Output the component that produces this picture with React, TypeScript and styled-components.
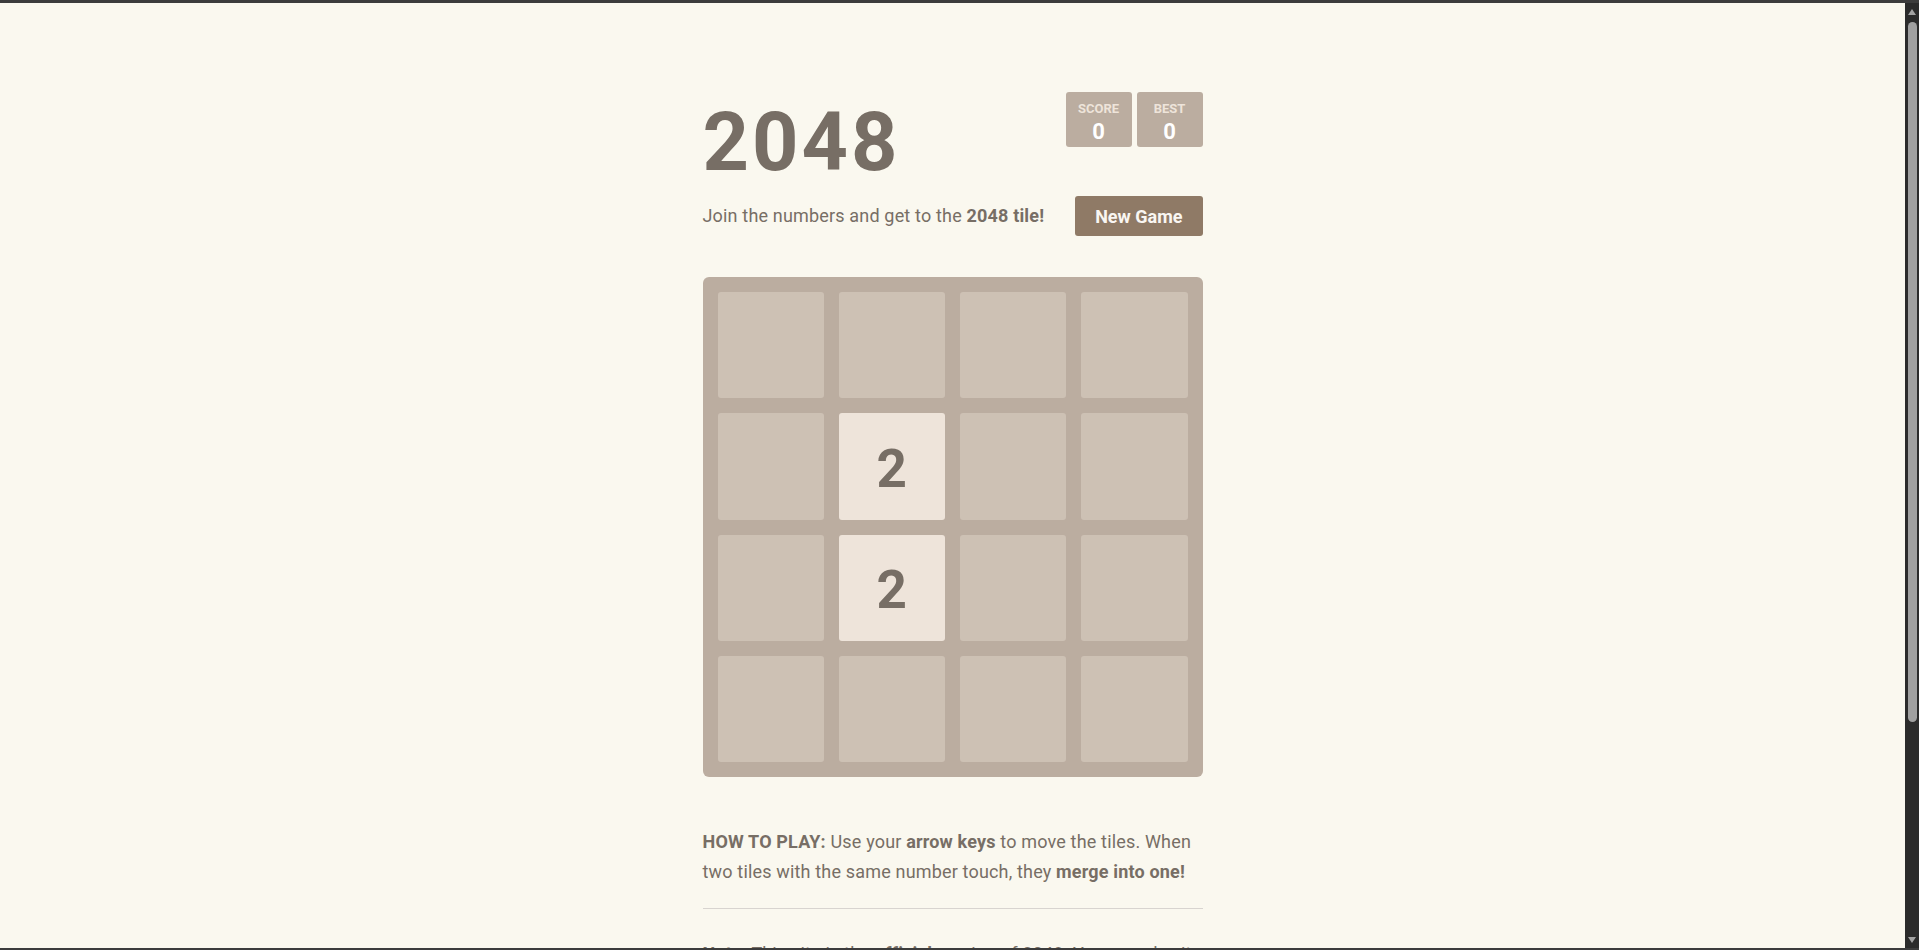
import styled, { createGlobalStyle } from 'styled-components'

const GlobalStyle = createGlobalStyle`
  html, body {
    margin: 0;
    padding: 0;
    background: #3c3c3c;
    overflow: hidden;
  }
  * {
    box-sizing: border-box;
  }
`

const board: number[][] = [
  [0, 0, 0, 0],
  [0, 2, 0, 0],
  [0, 2, 0, 0],
  [0, 0, 0, 0],
]

const Frame = styled.div`
  margin-top: 3px;
  height: 945px;
  display: flex;
`

const Viewport = styled.div`
  flex: 1;
  overflow: hidden;
  background: #faf8ef;
`

/* window scrollbar on the right edge */
const ScrollTrack = styled.div`
  width: 14px;
  display: flex;
  flex-direction: column;
  align-items: center;
  padding: 6px 0 5px;
  background: #2b2b2b;
`

const ScrollArrow = styled.div<{ $down?: boolean }>`
  width: 0;
  height: 0;
  border-left: 4.5px solid transparent;
  border-right: 4.5px solid transparent;
  ${(p) =>
    p.$down
      ? 'border-top: 6px solid #a3a3a3; margin-top: auto;'
      : 'border-bottom: 6px solid #a3a3a3;'}
`

const ScrollThumb = styled.div`
  width: 9px;
  height: 700px;
  margin-top: 7px;
  border-radius: 4.5px;
  background: #a0a0a0;
`

const Container = styled.div`
  width: 500px;
  margin: 0 auto;
  padding: 89px 0 80px;
  color: #776e65;
  font-family: Roboto, 'Liberation Sans', Arial, sans-serif;
  font-size: 18px;
  letter-spacing: 0.17px;
`

const Heading = styled.div`
  display: flex;
  justify-content: space-between;
  align-items: flex-start;
`

const Title = styled.h1`
  margin: 0;
  font-size: 81px;
  font-weight: 700;
  line-height: 102px;
  letter-spacing: 3px;
`

const Scores = styled.div`
  display: flex;
  gap: 5px;
`

const ScoreBox = styled.div`
  width: 66px;
  height: 55px;
  padding-top: 9px;
  display: flex;
  flex-direction: column;
  align-items: center;
  background: #bbada0;
  border-radius: 3px;
  font-weight: 700;
  letter-spacing: 0;
`

const ScoreLabel = styled.div`
  font-size: 13px;
  line-height: 15px;
  color: #eee4da;
  text-transform: uppercase;
`

const ScoreValue = styled.div`
  margin-top: 2px;
  font-size: 22px;
  line-height: 28px;
  color: #ffffff;
`

const IntroRow = styled.div`
  display: flex;
  justify-content: space-between;
  align-items: center;
  margin-top: 2px;
`

const Intro = styled.p`
  margin: 0;
  line-height: 30px;
`

const NewGameButton = styled.button`
  height: 40px;
  padding: 0 20px;
  border: none;
  border-radius: 3px;
  background: #8f7a66;
  color: #f9f6f2;
  font-family: inherit;
  font-size: 18px;
  font-weight: 700;
  letter-spacing: 0;
  cursor: pointer;
`

const Board = styled.div`
  margin-top: 41px;
  width: 500px;
  height: 500px;
  padding: 15px;
  display: grid;
  grid-template-columns: repeat(4, 1fr);
  grid-template-rows: repeat(4, 1fr);
  gap: 15px;
  background: #bbada0;
  border-radius: 6px;
`

const Cell = styled.div<{ $value: number }>`
  display: flex;
  align-items: center;
  justify-content: center;
  padding-top: 5px;
  border-radius: 3px;
  background: ${(p) => (p.$value ? '#eee4da' : '#cdc1b4')};
  color: #776e65;
  font-size: 53px;
  font-weight: 700;
`

const Text = styled.p<{ $top?: number }>`
  margin: ${(p) => p.$top ?? 0}px 0 0;
  line-height: 30px;
`

const Rule = styled.hr`
  margin: 21px 0 30px;
  border: none;
  border-bottom: 1px solid #d8d4d0;
`

const Link = styled.a`
  color: #776e65;
  font-weight: 700;
  text-decoration: underline;
`

export default function App() {
  return (
    <>
      <GlobalStyle />
      <Frame>
        <Viewport>
          <Container>
            <Heading>
              <Title>2048</Title>
              <Scores>
                <ScoreBox>
                  <ScoreLabel>Score</ScoreLabel>
                  <ScoreValue>0</ScoreValue>
                </ScoreBox>
                <ScoreBox>
                  <ScoreLabel>Best</ScoreLabel>
                  <ScoreValue>0</ScoreValue>
                </ScoreBox>
              </Scores>
            </Heading>

            <IntroRow>
              <Intro>
                Join the numbers and get to the <strong>2048 tile!</strong>
              </Intro>
              <NewGameButton>New Game</NewGameButton>
            </IntroRow>

            <Board>
              {board.flat().map((v, i) => (
                <Cell key={i} $value={v}>
                  {v ? v : null}
                </Cell>
              ))}
            </Board>

            <Text $top={50}>
              <strong>HOW TO PLAY:</strong> Use your <strong>arrow keys</strong> to move the
              tiles. When two tiles with the same number touch, they{' '}
              <strong>merge into one!</strong>
            </Text>
            <Rule />
            <Text>
              <strong>Note:</strong> This site is the <strong>official</strong> version of
              2048. You can play it on your phone via <Link>http://git.io/2048</Link>. All
              other apps or sites are derivatives or fakes, and should be used with caution.
            </Text>
            <Rule />
            <Text>
              Created by <Link>Gabriele Cirulli.</Link> Based on{' '}
              <Link>1024 by Veewo Studio</Link> and conceptually similar to{' '}
              <Link>Threes by Asher Vollmer.</Link>
            </Text>
          </Container>
        </Viewport>
        <ScrollTrack>
          <ScrollArrow />
          <ScrollThumb />
          <ScrollArrow $down />
        </ScrollTrack>
      </Frame>
    </>
  )
}
